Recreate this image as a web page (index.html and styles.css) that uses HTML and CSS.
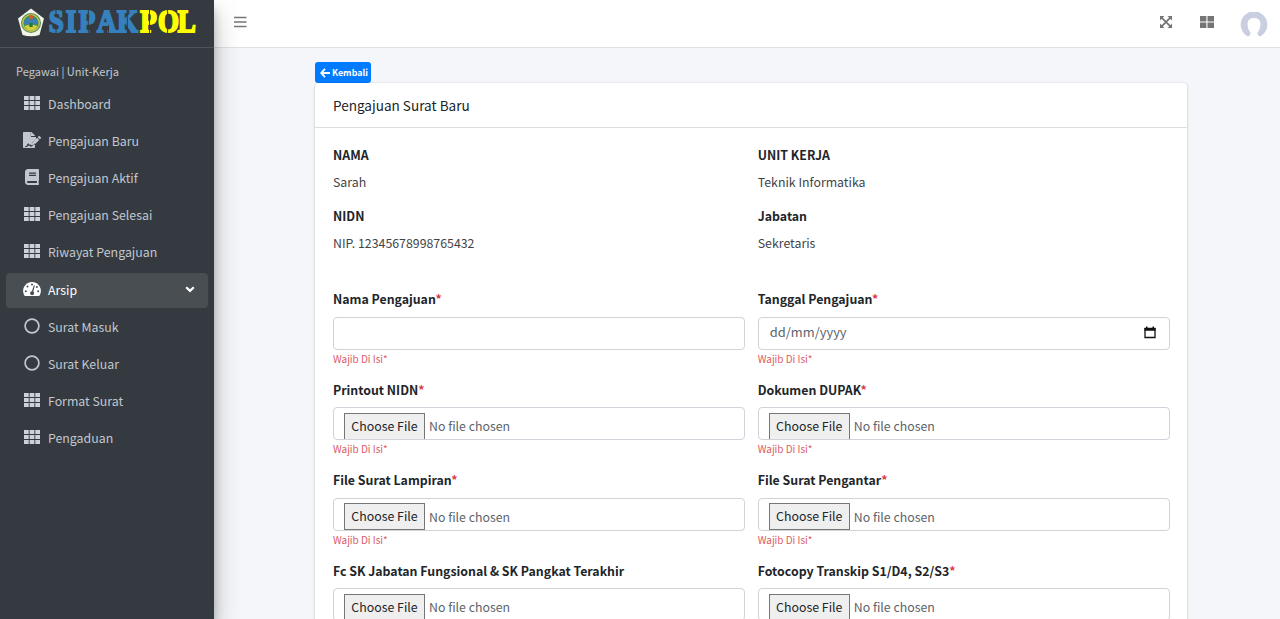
FILE: index.html
```html
<!DOCTYPE html>
<html lang="id">
<head>
<meta charset="utf-8">
<title>SIPAKPOL</title>
<link rel="stylesheet" href="styles.css">
</head>
<body>
<svg class="sprite" width="0" height="0">
  <symbol id="grid" viewBox="0 0 16 14"><path d="M0 0h4.700v4H0zM5.600 0h4.800v4H5.600zM11.300 0H16v4h-4.700zM0 5h4.700v4H0zM5.600 5h4.800v4H5.600zM11.300 5H16v4h-4.700zM0 10h4.700v4H0zM5.600 10h4.800v4H5.600zM11.300 10H16v4h-4.700z"/></symbol>
  <symbol id="ring" viewBox="0 0 16 16"><circle cx="8" cy="8" r="6.900" fill="none" stroke="currentColor" stroke-width="1.700"/></symbol>
</svg>
<div class="app">
  <aside class="sidebar">
    <div class="brand">
      <svg width="214" height="47" viewBox="0 0 214 47">
        <path d="M31 8.500l13 10-4.500 16.500q-8.500 2.500-17 0L18 18.500z" fill="#f3f3ea"/>
        <circle cx="31" cy="23" r="10" fill="#4f9150"/>
        <circle cx="31" cy="23" r="9" fill="#c3c253"/>
        <circle cx="31" cy="23" r="7.600" fill="#3e8f52"/>
        <path d="M24 24q.5-7 5-6l2 3 2-3q4.500-1 5 6l-4.500 1-2.500-2-2.500 2z" fill="#3a7fb5"/>
        <path d="M24.500 26q6.500-3 13 0-2 4.500-6.500 4.500T24.500 26z" fill="#d3d03b"/>
        <circle cx="31" cy="17" r="2.200" fill="#d95a2b"/>
        <path d="M29.300 23h3.400v4h-3.400z" fill="#267a35"/>
        <g class="logo-text" transform="translate(0 32.200) scale(.87 1)">
          <text fill="#3580bd" stroke="#3580bd" x="56 75.500 90.500 111.500 134.500">SIPAK</text>
          <text fill="#ffff00" stroke="#ffff00" x="161.200 181.500 204.300">POL</text>
        </g>
        <path d="M56 10v5M56 29v5M88.300 10v24M108.500 25v9M127.300 10v24M149.500 10v24M167.600 10v5M167.600 29v5" stroke="#343a40" stroke-width="1"/>
      </svg>
    </div>
    <div class="role">Pegawai | Unit-Kerja</div>
    <nav class="menu">
      <a class="item"><svg class="ico grid"><use href="#grid"/></svg><span>Dashboard</span></a>
      <a class="item"><svg class="ico wide" viewBox="0 0 576 512"><path fill-rule="evenodd" d="M218 424c-4-8-12-9-18-1-4 7-11 7-14 0l-16-33-22 64c-9 27-42 27-68 27v-24c20 0 42 0 46-11l21-63c8-22 38-24 48-3l16 33c17-15 43-12 54 11l23 0v-84l128-127v-53H272c-13 0-24-11-24-24V0H24C11 0 0 11 0 24v464c0 13 11 24 24 24h336c13 0 24-11 24-24V360l-95 96h-33c-16 0-31-14-38-32zM384 122c0-6-2-13-7-17L279 7c-4-5-10-7-17-7h-6v128h128zM289 348v68h68l163-163-68-68zM568 167l-31-31c-10-10-27-10-37 0l-28 28 68 68 28-28c10-10 10-27 0-37z"/><path d="M65 470h32q24 0 32-24l24-64 30 64q14-28 34-8 10 16 36 16h28" fill="none" stroke="#343a40" stroke-width="28"/></svg><span>Pengajuan Baru</span></a>
      <a class="item"><svg class="ico book" viewBox="0 0 448 512"><path fill-rule="evenodd" d="M448 360V24c0-13-11-24-24-24H96C43 0 0 43 0 96v320c0 53 43 96 96 96h328c13 0 24-11 24-24v-16c0-8-4-14-9-19-4-15-4-59 0-74 5-4 9-11 9-19zM128 112h224v36H128zM128 184h224v36H128zM381 448H96c-42 0-42-64 0-64h285c-2 17-2 47 0 64z"/></svg><span>Pengajuan Aktif</span></a>
      <a class="item"><svg class="ico grid"><use href="#grid"/></svg><span>Pengajuan Selesai</span></a>
      <a class="item"><svg class="ico grid"><use href="#grid"/></svg><span>Riwayat Pengajuan</span></a>
      <a class="item active"><svg class="ico wide" viewBox="0 0 18 16"><path d="M9 1a9 9 0 0 0-7.700 13.500c.2.300.5.500.9.500h13.600c.4 0 .7-.2.9-.5A9 9 0 0 0 9 1z"/><g fill="#494e53"><circle cx="9" cy="3.600" r="1"/><circle cx="4.500" cy="5.600" r="1"/><circle cx="2.800" cy="10.200" r="1"/><circle cx="15.200" cy="10.200" r="1"/><circle cx="13.900" cy="5.900" r="1"/><path d="M10.900 4.200l1 .4-1.600 6a2 2 0 1 1-1.400-.4z"/></g></svg><span>Arsip</span><svg class="chev" width="10" height="7" viewBox="0 0 10 7"><path d="M1.200 1.200L5 4.900l3.800-3.700" fill="none" stroke="#fff" stroke-width="2.200"/></svg></a>
      <a class="item"><svg class="ico ring"><use href="#ring"/></svg><span>Surat Masuk</span></a>
      <a class="item"><svg class="ico ring"><use href="#ring"/></svg><span>Surat Keluar</span></a>
      <a class="item"><svg class="ico grid"><use href="#grid"/></svg><span>Format Surat</span></a>
      <a class="item"><svg class="ico grid"><use href="#grid"/></svg><span>Pengaduan</span></a>
    </nav>
  </aside>
  <div class="page">
    <header class="topbar">
      <svg width="13" height="12" viewBox="0 0 13 12"><path d="M0 1.500h12.500M0 6h12.500M0 10.500h12.500" stroke="#777" stroke-width="1.500"/></svg>
      <div class="tools">
        <svg width="12" height="12" viewBox="0 0 13 13" fill="#757575"><path d="M0 0h4.800L0 4.800zM13 0v4.800L8.200 0zM0 13V8.200L4.800 13zM13 13H8.200L13 8.200z"/><path d="M1.500 1.500l10 10M11.500 1.500l-10 10" stroke="#757575" stroke-width="1.900"/></svg>
        <svg width="14" height="12" viewBox="0 0 14 12" fill="#757575"><path d="M0 0h6.400v5.400H0zM7.500 0H14v5.400H7.500zM0 6.500h6.400V12H0zM7.500 6.500H14V12H7.500z"/></svg>
        <svg class="avatar" width="28" height="26" viewBox="0 0 28 26"><path fill="#c9cfe0" d="M8 24.500A13.300 13.300 0 1 1 20 24.500Q17.500 24 17.500 20.500 20.500 17 20.500 11.500 20 6 14 6T7.500 11.500Q7.500 17 10.500 20.500 10.500 24 8 24.500z"/></svg>
      </div>
    </header>
    <main class="content">
      <a class="back"><svg width="10" height="10" viewBox="0 0 10 10"><path d="M5 .8L1.200 5 5 9.200M1.500 5H10" fill="none" stroke="#fff" stroke-width="1.800"/></svg><span>Kembali</span></a>
      <section class="card">
        <h1 class="card-title"><span>Pengajuan Surat Baru</span></h1>
        <div class="info">
          <div><b>NAMA</b><p>Sarah</p><b>NIDN</b><p>NIP. 12345678998765432</p></div>
          <div><b>UNIT KERJA</b><p>Teknik Informatika</p><b>Jabatan</b><p>Sekretaris</p></div>
        </div>
        <form class="fields">
          <div class="field"><label>Nama Pengajuan<i>*</i></label><div class="control"></div><small>Wajib Di Isi*</small></div>
          <div class="field"><label>Tanggal Pengajuan<i>*</i></label><div class="control date"><span>dd/mm/yyyy</span><svg width="12" height="13" viewBox="0 0 12 13"><path d="M1 2.500h10v9H1z" fill="none" stroke="#111" stroke-width="1.300"/><path d="M.5 2h11v2.700H.5zM2 .5h1.500V2H2zM8.500.5H10V2H8.500z" fill="#111"/></svg></div><small>Wajib Di Isi*</small></div>
          <div class="field"><label>Printout NIDN<i>*</i></label><div class="control file"><span class="choose">Choose File</span><span>No file chosen</span></div><small>Wajib Di Isi*</small></div>
          <div class="field"><label>Dokumen DUPAK<i>*</i></label><div class="control file"><span class="choose">Choose File</span><span>No file chosen</span></div><small>Wajib Di Isi*</small></div>
          <div class="field"><label>File Surat Lampiran<i>*</i></label><div class="control file"><span class="choose">Choose File</span><span>No file chosen</span></div><small>Wajib Di Isi*</small></div>
          <div class="field"><label>File Surat Pengantar<i>*</i></label><div class="control file"><span class="choose">Choose File</span><span>No file chosen</span></div><small>Wajib Di Isi*</small></div>
          <div class="field"><label>Fc SK Jabatan Fungsional &amp; SK Pangkat Terakhir</label><div class="control file"><span class="choose">Choose File</span><span>No file chosen</span></div></div>
          <div class="field"><label>Fotocopy Transkip S1/D4, S2/S3<i>*</i></label><div class="control file"><span class="choose">Choose File</span><span>No file chosen</span></div></div>
        </form>
      </section>
    </main>
  </div>
</div>
</body>
</html>
```
FILE: styles.css
```css
* { box-sizing: border-box; }
body { margin: 0; font-family: "Noto Sans CJK SC", "Noto Sans", sans-serif; font-size: 12.35px; line-height: 20px; color: #212529; }
.sprite { position: absolute; }
.app { display: flex; height: 619px; overflow: hidden; background: #f4f6f9; }
.sidebar { flex: 0 0 214px; background: #343a40; color: #c2c7d0; box-shadow: 0 12px 25px rgba(0,0,0,.25), 0 9px 9px rgba(0,0,0,.2); z-index: 2; }
.brand { height: 48px; border-bottom: 1px solid #4b545c; }
.brand svg { display: block; }
.logo-text { font: bold 31px "Liberation Serif", serif; stroke-width: 2; }
.role { padding: 13px 16px 0; height: 39px; font-size: 11.05px; line-height: 20px; }
.menu { padding: 0 6.500px 0 6px; display: flex; flex-direction: column; gap: 2.100px; }
.item { display: flex; align-items: center; height: 35px; padding: 0 13px 1px 16px; border-radius: 4px; }
.ico { fill: currentColor; flex: none; }
.item span { flex: 1; }
.ico.grid { height: 14px; width: 16px; margin: 0 8px 2px 2px; color: #cdd1d8; }
.ico.wide { height: 16px; width: 18px; margin: 0 7px 2px 1px; }
.ico.book { height: 16px; width: 14px; margin: 0 9px 3px 3px; }
.ico.ring { height: 16px; width: 16px; margin: 0 8px 2px 2px; }
.active { background: #494e53; color: #fff; height: 35px; margin: .5px 0 -.5px; }
.page { flex: 1; min-width: 0; }
.topbar { height: 48px; background: #fff; border-bottom: 1px solid #dee2e6; display: flex; justify-content: space-between; padding: 0 12px 4px 20px; align-items: center; }
.tools { display: flex; align-items: center; }
.tools svg + svg { margin-left: 28px; }
.tools .avatar { margin: 7px 0 0 26px; }
.content { padding: 14px 93px 0 101px; }
.back { display: flex; align-items: center; gap: 2px; width: 56px; height: 21px; padding-left: 5px; border-radius: 3px; background: #007bff; color: #fff; font-size: 8.900px; font-weight: 700; }
.card { background: #fff; height: 700px; border-radius: 4px; box-shadow: 0 0 1px rgba(0,0,0,.13), 0 1px 3px rgba(0,0,0,.2); }
.card-title { margin: 0; height: 45px; padding: 11.500px 18px; border-bottom: 1px solid #dcdddf; font-size: 13.550px; font-weight: 400; line-height: 20px; }
.info, .fields { display: grid; grid-template-columns: 1fr 1fr; column-gap: 13px; padding: 0 17.500px 0 18px; }
.info { padding-top: 17px; height: 161px; }
.info b { display: block; }
.info p { margin: 7px 0 14px; color: #3f4449; }
.fields { grid-auto-rows: 90.600px; }
label { display: block; font-weight: 700; }
label i { font-style: normal; color: #dc3545; }
.control { height: 33px; margin-top: 7.500px; border: 1px solid #ced4da; border-radius: 4px; color: #5c646b; display: flex; align-items: center; }
.date { padding: 0 13px 2px 11px; justify-content: space-between; font-size: 12.900px; }
.file { padding: 5px 0 0 10px; gap: 4px; overflow: hidden; }
.choose { width: 81px; height: 27px; border: 1px solid #767676; background: #efefef; color: #212529; text-align: center; line-height: 24px; }
small { display: block; font-size: 9.950px; line-height: 17px; color: #dc5b66; }
```
